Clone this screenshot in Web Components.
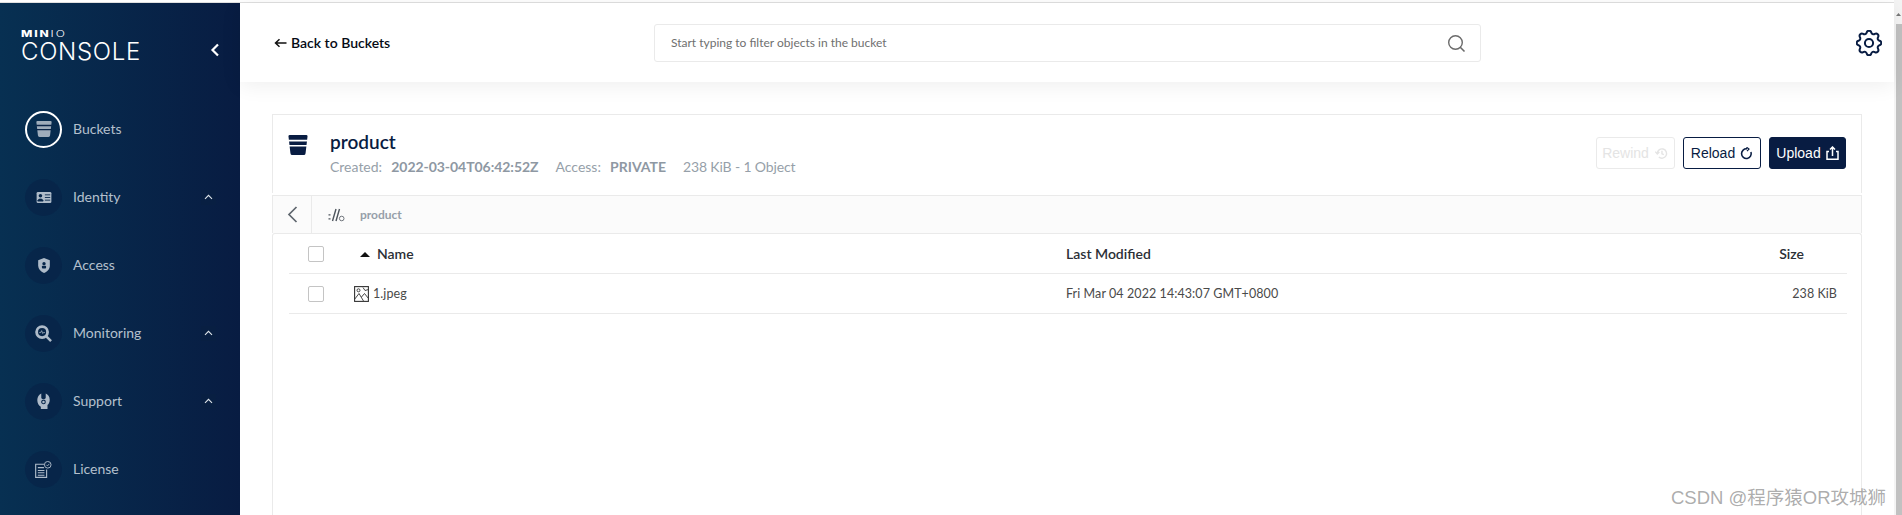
<!DOCTYPE html>
<html><head><meta charset="utf-8"><title>MinIO Console</title>
<style>
html,body{margin:0;padding:0;height:515px;overflow:hidden;background:#fff;font-family:Lato,"Noto Sans",sans-serif}
</style></head>
<body>
<mc-app>
  <mc-sidebar slot="side">
    <mc-nav-item label="Buckets" icon="bucket" active></mc-nav-item>
    <mc-nav-item label="Identity" icon="identity" expand></mc-nav-item>
    <mc-nav-item label="Access" icon="access"></mc-nav-item>
    <mc-nav-item label="Monitoring" icon="monitoring" expand></mc-nav-item>
    <mc-nav-item label="Support" icon="support" expand></mc-nav-item>
    <mc-nav-item label="License" icon="license"></mc-nav-item>
  </mc-sidebar>
  <mc-header slot="head"></mc-header>
  <mc-panel slot="main">
    <mc-bucket-head slot="top"></mc-bucket-head>
    <mc-crumbs slot="crumbs"></mc-crumbs>
    <mc-row header name="Name" modified="Last Modified" size="Size"></mc-row>
    <mc-row name="1.jpeg" modified="Fri Mar 04 2022 14:43:07 GMT+0800" size="238 KiB"></mc-row>
  </mc-panel>
</mc-app>
<script>
const ICONS={
bucket:`<svg viewBox="1 1 18 18.500" width="16" height="16"><path d="M2.500 1h15a1.300 1.300 0 0 1 1.300 1.500l-1.800 15.300a1.800 1.800 0 0 1-1.800 1.700H4.800a1.800 1.800 0 0 1-1.800-1.700L1.200 2.500A1.300 1.300 0 0 1 2.500 1z" fill="currentColor"/><path d="M1 6.200h18M1 10.900h18" stroke="var(--gap,#0a2447)" stroke-width="1.500"/></svg>`,
identity:`<svg viewBox="0 0 18 14" width="16" height="13"><rect x=".7" y=".7" width="16.600" height="12.600" rx="1.500" fill="currentColor"/><circle cx="5" cy="5" r="2" fill="#07264a"/><path d="M2 11c0-3 6-3 6 0zM10 4h6M10 7h6M10 10h6" fill="#07264a" stroke="#07264a" stroke-width="1"/></svg>`,
access:`<svg viewBox="0 0 14 18" width="12" height="15"><path d="M7 0l7 2.600v6.600c0 4-3 7-7 8.800-4-1.800-7-4.800-7-8.800V2.600z" fill="currentColor"/><circle cx="7" cy="6.800" r="2" fill="#07264a"/><rect x="4.500" y="9.300" width="5" height="3.400" rx="1" fill="#07264a"/></svg>`,
monitoring:`<svg viewBox="0 0 18 18" width="17" height="17"><circle cx="7.500" cy="7.500" r="5.800" fill="none" stroke="currentColor" stroke-width="3"/><path d="M12 12l5 5" stroke="currentColor" stroke-width="2.600"/><path d="M4.500 8h1.500l1-2 1.200 3 .8-1h1.500" fill="none" stroke="currentColor" stroke-width=".8"/></svg>`,
support:`<svg viewBox="0 0 14 18" width="13" height="16"><path d="M4.500.5v4.500c0 1 1 1.800 2.500 1.800s2.500-.8 2.500-1.800V.5C12 1.500 14 4 14 7.500c0 3-1.200 5-2.500 6V18H4v-2.500C1.800 14.500 0 11.500 0 8 0 4.500 2 1.500 4.500.5z" fill="currentColor"/><circle cx="7" cy="10" r="2" fill="none" stroke="#07264a" stroke-width="1.200"/></svg>`,
license:`<svg viewBox="0 0 18 18" width="17" height="17"><path d="M10 3.500H.7v13.800h11.600V9" fill="none" stroke="currentColor" stroke-width="1.200"/><path d="M3 7h6.500M3 10h7M3 12.500h7M3 15h7" stroke="currentColor" stroke-width="1.100"/><circle cx="13.500" cy="4" r="3.500" fill="none" stroke="currentColor" stroke-width="1"/><path d="M12 4l1.200 1.200 2-2.200" fill="none" stroke="currentColor" stroke-width=".9"/></svg>`
};
const def=(n,html)=>customElements.define(n,class extends HTMLElement{
  constructor(){super();this.attachShadow({mode:"open"}).innerHTML=html;}
});

def("mc-app",`<style>
:host{display:flex;width:1902px;height:515px;overflow:hidden;position:relative;font-family:Lato,"Noto Sans",sans-serif}
.page{flex:1;min-width:0;display:flex;flex-direction:column}
.topline{height:3px;flex:none;box-sizing:border-box;border-bottom:1px solid #e0e0e0;background:#fff}
.row{flex:1;display:flex;min-height:0}
.content{flex:1;display:flex;flex-direction:column;min-width:0;background:#fff}
.bar{width:8px;flex:none;background:#f4f4f4;display:flex;flex-direction:column}
.btn{height:24px;flex:none;display:flex;justify-content:flex-end;padding:13px 1px 0 0;box-sizing:border-box}
.thumb{flex:1;background:#c1c1c1;margin-left:2px}
.wm{position:absolute;left:1671px;top:487px;font:18.500px/22px "Liberation Sans","Noto Sans CJK SC",sans-serif;color:rgba(120,120,120,.62);white-space:nowrap}
</style>
<div class="page">
<div class="topline"></div>
<div class="row">
  <slot name="side"></slot>
  <div class="content"><slot name="head"></slot><slot name="main"></slot></div>
</div></div>
<div class="bar"><div class="btn"><svg width="5" height="3" viewBox="0 0 5 3"><path d="M0 3l2.500-3L5 3z" fill="#777"/></svg></div><div class="thumb"></div></div>
<div class="wm">CSDN @程序猿OR攻城狮</div>`);

def("mc-sidebar",`<style>
:host{display:flex;flex-direction:column;width:240px;flex:none;background:linear-gradient(90deg,#073052 0%,#081c42 100%);color:#fff}
.logo{height:92px;box-sizing:border-box;padding:27px 20px 0 21px;display:flex;justify-content:space-between;align-items:flex-start}
.m{font:800 8.500px/9px Inter,sans-serif;letter-spacing:1.300px;height:9px;transform:scaleX(1.420);transform-origin:0 50%;white-space:nowrap}
.m i{font-style:normal;font-weight:300}
.c{font:300 24px/24px Inter,sans-serif;letter-spacing:.7px;margin-top:1px;white-space:nowrap}
.ch{margin-top:13px}
nav{display:flex;flex-direction:column}
</style>
<div class="logo"><div><div class="m">MIN<i>IO</i></div><div class="c">CONSOLE</div></div>
<svg class="ch" width="10" height="14" viewBox="0 0 10 14"><path d="M8 1.500L2.500 7 8 12.500" fill="none" stroke="#fff" stroke-width="2.200"/></svg></div>
<nav><slot></slot></nav>`);

customElements.define("mc-nav-item",class extends HTMLElement{
  constructor(){super();
    const a=this.hasAttribute("active"),e=this.hasAttribute("expand");
    this.attachShadow({mode:"open"}).innerHTML=`<style>
:host{display:flex;align-items:center;height:68px;padding-left:25px;color:#b4c0cd;font:14px/20px Lato,sans-serif;position:relative}
.c{width:37px;height:37px;box-sizing:border-box;border-radius:50%;display:flex;align-items:center;justify-content:center;flex:none;background:rgba(8,28,66,.42);color:#aebbc9;--gap:#0a2447}
.c.a{background:transparent;border:2px solid #fff;color:#9fadbb}
.t{margin-left:11px;flex:1}
.x{width:15px;height:15px;background:#081f42;display:flex;align-items:center;justify-content:center;margin-right:24px}
</style><div class="c ${a?"a":""}">${ICONS[this.getAttribute("icon")]}</div><span class="t">${this.getAttribute("label")}</span>${e?`<span class="x"><svg width="9" height="6" viewBox="0 0 9 6"><path d="M1 4.800l3.500-3.500L8 4.800" fill="none" stroke="#dfe5ea" stroke-width="1.100"/></svg></span>`:""}`;
  }
});

def("mc-header",`<style>
:host{display:block;height:79px;flex:none;background:#fff;box-shadow:0 3px 20px rgba(0,0,0,.07);position:relative}
.w{display:flex;align-items:center;height:79px}
.b{display:flex;align-items:center;margin-left:34px;width:380px;font:600 14px/20px Lato,sans-serif;color:#050a14;gap:4px}
.s{width:827px;height:38px;box-sizing:border-box;border:1px solid #eaeaea;border-radius:3px;margin-top:1px;display:flex;align-items:center;justify-content:space-between;padding:0 14px 0 16px;font:12px/16px Lato,sans-serif;color:#6f6f6f}
.g{margin-left:375px;margin-top:1px;display:flex}
</style>
<div class="w"><div class="b"><svg width="13" height="10" viewBox="0 0 13 10"><path d="M12.500 5H2.500M5.500 1.200L1.500 5l4 3.800" fill="none" stroke="#111" stroke-width="1.500"/></svg><span>Back to Buckets</span></div>
<div class="s"><span>Start typing to filter objects in the bucket</span><svg width="19" height="19" viewBox="0 0 19 19"><circle cx="8.500" cy="8.500" r="6.800" fill="none" stroke="#6a6a6a" stroke-width="1.400"/><path d="M13 13l4.500 4.500" stroke="#6a6a6a" stroke-width="1.600"/></svg></div>
<div class="g"><svg width="26" height="26" viewBox="2.500 2.500 19 19" fill="none" stroke="#081c42" stroke-width="1.450" stroke-linecap="round" stroke-linejoin="round"><path d="M10.325 4.317c.426-1.756 2.924-1.756 3.350 0a1.724 1.724 0 002.573 1.066c1.543-.94 3.310.826 2.370 2.370a1.724 1.724 0 001.065 2.572c1.756.426 1.756 2.924 0 3.350a1.724 1.724 0 00-1.066 2.573c.94 1.543-.826 3.310-2.370 2.370a1.724 1.724 0 00-2.572 1.065c-.426 1.756-2.924 1.756-3.350 0a1.724 1.724 0 00-2.573-1.066c-1.543.94-3.310-.826-2.370-2.370a1.724 1.724 0 00-1.065-2.572c-1.756-.426-1.756-2.924 0-3.350a1.724 1.724 0 001.066-2.573c-.94-1.543.826-3.310 2.370-2.370.996.608 2.296.07 2.572-1.065z"/><circle cx="12" cy="12" r="3"/></svg></div></div>`);

def("mc-panel",`<style>
:host{display:flex;flex-direction:column;margin:32px 32px 0;flex:1;min-height:0}
.t{border:1px solid #eaeaea;border-bottom:0;height:79px;box-sizing:border-box;flex:none}
.b{margin-top:2px;flex:none}
.l{flex:1;border:1px solid #eaeaea;border-bottom:0;padding:0 14px 0 16px;border-radius:3px 3px 0 0}
</style><div class="t"><slot name="top"></slot></div><div class="b"><slot name="crumbs"></slot></div><div class="l"><slot></slot></div>`);

def("mc-button",`<style>
:host{display:flex;align-items:center;justify-content:center;gap:5px;height:32px;box-sizing:border-box;border-radius:3px;font:14px/16px "Liberation Sans",sans-serif;border:1px solid #081c42;color:#081c42;background:#fff}
:host([kind=dis]){border-color:#eaeaea;color:#e4e4e4}
:host([kind=pri]){background:#081c42;color:#fff}
</style><slot></slot>`);

def("mc-bucket-head",`<style>
:host{display:flex;height:78px;padding:15px 15px 0 15px;box-sizing:border-box;align-items:flex-start}
.i{color:#081c42;width:20px;height:20px;margin-top:5px;--gap:#fff;flex:none}
.i svg{width:20px;height:20px;display:block}
.x{margin-left:22px;flex:1}
h1{margin:0;font:600 19px/24px Lato,sans-serif;color:#081c42}
.m{font:14px/20px Lato,sans-serif;color:#969fa9;margin-top:3px;white-space:nowrap}
.m b{font-weight:700;color:#8e98a3;margin-left:2px}
.m span+span{margin-left:17px}
.m span:last-child{letter-spacing:-.15px}
.btns{display:flex;gap:8px;margin-top:7px}
mc-button{flex:none}
</style>
<div class="i">${ICONS.bucket}</div>
<div class="x"><h1>product</h1><div class="m"><span>Created:&nbsp; <b style="letter-spacing:-.05px">2022-03-04T06:42:52Z</b></span><span>Access:&nbsp; <b>PRIVATE</b></span><span>238 KiB - 1 Object</span></div></div>
<div class="btns">
<mc-button kind="dis" style="width:79px">Rewind <svg width="15" height="13" viewBox="0 0 15 14" fill="none" stroke="#e4e4e4" stroke-width="1.500"><path d="M3 7a5 5 0 1 1 1.600 3.700M.8 5 3 7.500 5.200 5.500M8 4v3.300l2 1"/></svg></mc-button>
<mc-button style="width:78px">Reload <svg width="13" height="13" viewBox="0 0 14 14" fill="none" stroke="#081c42" stroke-width="1.700"><path d="M11.800 5.500A5.200 5.200 0 1 1 7.500 2"/><path d="M7 .2l2.700 2L7.500 4.500" stroke-width="1.300"/></svg></mc-button>
<mc-button kind="pri" style="width:77px">Upload <svg width="13" height="14" viewBox="0 0 13 14" fill="none" stroke="#fff" stroke-width="1.500"><path d="M3 5.500H1v7.700h11V5.500H10M6.500 10V1.500M4 3.500l2.500-2.500L9 3.500"/></svg></mc-button>
</div>`);

def("mc-crumbs",`<style>
:host{display:flex;height:38px;box-sizing:border-box;background:#fbfbfb;border:1px solid #eaeaea;border-bottom:0;align-items:center}
.b{width:38px;height:100%;border-right:1px solid #eaeaea;display:flex;align-items:center;justify-content:center;flex:none}
.i{margin-left:16px;display:flex;padding-top:1px}
.t{margin-left:15px;padding-top:1px;font:700 12px/16px Lato,sans-serif;color:#969fa9}
</style>
<div class="b"><svg width="11" height="17" viewBox="0 0 11 17"><path d="M9.500 1L2 8.500 9.500 16" fill="none" stroke="#5f666e" stroke-width="1.700"/></svg></div>
<div class="i"><svg width="17" height="14" viewBox="0 0 17 14" fill="none" stroke="#4f565e"><path d="M1.500 6.200v1.400M1.500 10.200v1.400" stroke-width="2"/><path d="M8 1L4.500 13M11.500 1L8 13" stroke-width="1.400"/><circle cx="13.700" cy="10.500" r="2.300" stroke-width=".8"/></svg></div>
<div class="t">product</div>`);

customElements.define("mc-row",class extends HTMLElement{
  constructor(){super();
    const h=this.hasAttribute("header");
    const fileIcon=`<svg width="15" height="16" viewBox="0 0 15 16" fill="none" stroke="#333"><rect x=".6" y=".6" width="13.800" height="14.800" stroke-width="1.100"/><circle cx="4.500" cy="4.300" r="1.500" stroke-width=".9"/><path d="M.8 13L5 7.500l4.500 7.500M7.500 11l3-3.500 4 5M9 1.500l2 3 3.500-1" stroke-width=".9"/></svg>`;
    const tri=`<svg width="10" height="5" viewBox="0 0 10 5"><path d="M0 5L5 0l5 5z" fill="#111"/></svg>`;
    this.attachShadow({mode:"open"}).innerHTML=`<style>
:host{display:grid;grid-template-columns:46px 712px 1fr auto;align-items:center;height:40px;box-sizing:border-box;border-bottom:1px solid #eaeaea;padding:1px ${h?43:10}px 0 19px;color:${h?"#2b2f36":"#4a4a4a"};font:${h?"600 14px":"12.500px"}/18px Lato,sans-serif;${h?"":"letter-spacing:.08px"}}
.k{width:16px;height:16px;box-sizing:border-box;border:1px solid #c4c4c4;border-radius:2px;background:#fff}
.n{display:flex;align-items:center;gap:${h?7:4}px;${h?"padding-left:6px":""}}
</style><div class="k"></div><div class="n">${h?tri:fileIcon}<span>${this.getAttribute("name")}</span></div><div>${this.getAttribute("modified")}</div><div>${this.getAttribute("size")}</div>`;
  }
});
</script>
</body></html>
